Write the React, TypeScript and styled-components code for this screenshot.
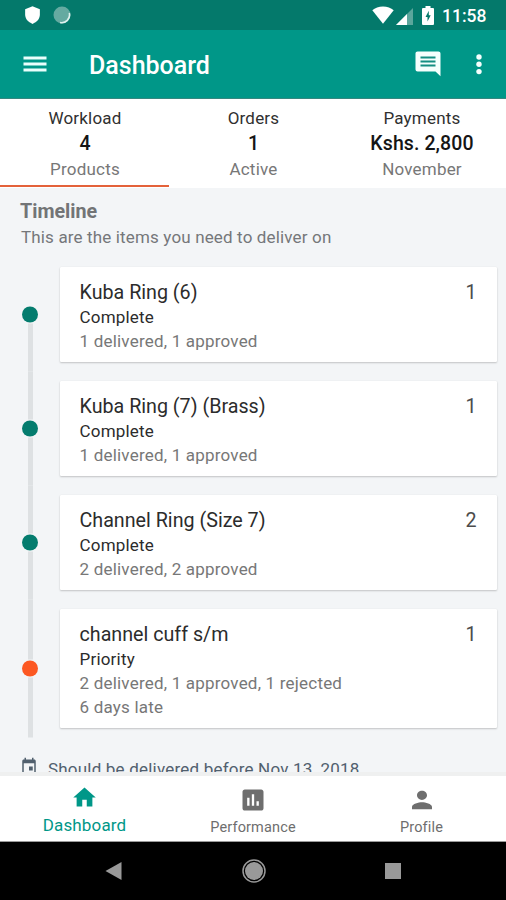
import React from "react";
import styled, { createGlobalStyle } from "styled-components";

const GlobalStyle = createGlobalStyle`
  * { box-sizing: border-box; }
  body { margin: 0; background: #000; font-family: Roboto, "Liberation Sans", sans-serif; }
`;

const Screen = styled.div`
  display: flex;
  flex-direction: column;
  width: 506px;
  height: 900px;
  overflow: hidden;
  background: #f3f5f7;
`;

const StatusBar = styled.div`
  display: flex;
  align-items: center;
  height: 30px;
  flex: none;
  padding: 0 18px 0 24px;
  background: #04796b;
  color: #fff;
`;

const StatusIcons = styled.div`
  display: flex;
  align-items: center;
  gap: 12px;
  flex: 1;
`;

const Clock = styled.span`
  width: 46px;
  margin-left: 8px;
  padding-top: 2px;
  font-size: 17.5px;
  font-weight: 500;
  line-height: 30px;
  white-space: nowrap;
`;

const AppBar = styled.header`
  display: flex;
  align-items: center;
  height: 69px;
  flex: none;
  padding: 0 24px 0 23px;
  background: #009788;
  border-bottom: 1px solid #36877f;
  color: #fff;
`;

const Title = styled.h1`
  flex: 1;
  margin: 4px 0 0 42px;
  font-size: 25px;
  font-weight: 500;
  line-height: 32px;
`;

const Tabs = styled.div`
  display: grid;
  grid-template-columns: 169px 168px 169px;
  height: 89px;
  flex: none;
  background: #fff;
`;

const Tab = styled.div<{ $active?: boolean }>`
  display: flex;
  flex-direction: column;
  align-items: center;
  padding: 7px 0 0 1px;
  border-bottom: 2px solid ${(p) => (p.$active ? "#e4623a" : "transparent")};
  margin-bottom: 1px;
`;

const TabLabel = styled.span`
  font-size: 17px;
  line-height: 25px;
  color: #303030;
  letter-spacing: 0.2px;
`;

const TabValue = styled.span`
  font-size: 19.5px;
  font-weight: 500;
  line-height: 26px;
  color: #151515;
  letter-spacing: 0.1px;
`;

const TabNote = styled(TabLabel)`
  color: #777;
`;

const Content = styled.main`
  height: 584px;
  flex: none;
  overflow: hidden;
  padding: 10px 10px 0 20px;
`;

const Heading = styled.h2`
  margin: 0;
  padding-top: 1px;
  font-size: 19.7px;
  font-weight: 700;
  line-height: 26px;
  color: #727476;
`;

const Subheading = styled.p`
  margin: 0 0 8.5px 1px;
  font-size: 17px;
  line-height: 24px;
  color: #75777a;
  letter-spacing: 0.15px;
`;

const TimelineRow = styled.div`
  display: grid;
  grid-template-columns: 20px 437px;
  column-gap: 19.5px;
`;

const Rail = styled.div`
  display: flex;
  flex-direction: column;
  align-items: center;
  transform: translateY(-0.5px);
`;

const RailLine = styled.i<{ $hidden?: boolean }>`
  flex: 1;
  width: 5px;
  background: ${(p) => (p.$hidden ? "transparent" : "#dee1e3")};
`;

const Dot = styled.i<{ $late?: boolean }>`
  width: 16px;
  height: 16px;
  margin: 1px 0;
  flex: none;
  border-radius: 50%;
  background: ${(p) => (p.$late ? "#fc5822" : "#047c6e")};
`;

const Card = styled.article`
  display: flex;
  justify-content: space-between;
  margin: 9.5px 0;
  padding: 12px 20px 9px;
  background: #fff;
  border-radius: 1px;
  box-shadow: 0 1px 2px rgba(0, 0, 0, 0.2), 0 0 1px rgba(0, 0, 0, 0.1);
`;

const ItemName = styled.div`
  margin-bottom: -2px;
  font-size: 19.7px;
  line-height: 28px;
  color: #2c2c2c;
`;

const ItemStatus = styled.div`
  font-size: 17px;
  line-height: 24px;
  color: #2c2c2c;
  letter-spacing: 0.2px;
`;

const ItemDetail = styled(ItemStatus)`
  color: #777;
`;

const Count = styled(ItemName)`
  color: #4c4c4c;
`;

const DueRow = styled.div`
  display: flex;
  align-items: flex-start;
  gap: 10px;
  margin-top: 19px;
  color: #51606e;
  font-size: 17px;
  line-height: 24px;
  letter-spacing: 0.2px;
  white-space: nowrap;
`;

const BottomNav = styled.nav`
  display: grid;
  grid-template-columns: 169px 168px 169px;
  height: 70px;
  flex: none;
  padding-top: 6px;
  background: #fff;
  border-top: 4px solid #eff0f0;
  border-bottom: 1px solid #9b9b9b;
`;

const NavItem = styled.div<{ $active?: boolean }>`
  display: flex;
  flex-direction: column;
  align-items: center;
  padding-top: ${(p) => (p.$active ? 2 : 4)}px;
  color: ${(p) => (p.$active ? "#009788" : "#6e6e6e")};
  font-size: ${(p) => (p.$active ? 17 : 14.5)}px;
  line-height: 28px;
  letter-spacing: 0.15px;
`;

const SystemNav = styled.div`
  display: flex;
  align-items: center;
  justify-content: space-between;
  height: 58px;
  flex: none;
  padding: 0 105px;
  background: #000;
`;

const StatusRight = styled.div`
  display: flex;
  align-items: center;
`;

const SignalSlot = styled.span`
  display: flex;
  margin: 2px 9px 0 2px;
`;

const AppActions = styled.div`
  display: flex;
  align-items: center;
  gap: 35px;
`;

const ShieldIcon = () => (
  <svg width="17" height="20" viewBox="0 0 18 20"><path fill="#fff" d="M9 0.8 16.8 4v5.6c0 4.500-3.200 8.200-7.800 9.800C4.400 17.800 1.200 14.100 1.200 9.600V4z" /></svg>
);
const SyncIcon = () => (
  <svg width="18" height="18" viewBox="0 0 18 18">
    <circle cx="9" cy="9" r="8.500" fill="#65aaa1" />
    <path d="M16.300 7A7.800 7.800 0 0 1 7 16.500" fill="none" stroke="#e0f1ee" strokeWidth="1.600" />
  </svg>
);
const WifiIcon = () => (
  <svg width="22" height="18" viewBox="0 0 22 18"><path fill="#fff" d="M11 17.700.300 4.300C3 2 6.800.500 11 .500S19 2 21.700 4.300z" /></svg>
);
const SignalIcon = () => (
  <svg width="17" height="17" viewBox="0 0 17 17">
    <path fill="#5ba69c" d="M17 0v17H0z" /><path fill="#fff" d="M11 6v11H0z" />
  </svg>
);
const BatteryIcon = () => (
  <svg width="12" height="19" viewBox="0 0 12 19">
    <path fill="#fff" d="M3.500 0h5v2H11q1 0 1 1v15q0 1-1 1H1q-1 0-1-1V3q0-1 1-1h2.500z" />
    <path fill="#04796b" d="M6.800 4.800 3.500 11h2v4.500L8.700 9.300H6.800z" />
  </svg>
);
const MenuIcon = () => (
  <svg width="24" height="18" viewBox="0 0 24 18"><path fill="#e9fffc" d="M.500 1.500h23v3H.500zM.500 7.500h23v3H.500zM.500 13.500h23v3H.500z" /></svg>
);
const CommentIcon = () => (
  <svg width="26" height="26" viewBox="0 0 26 26">
    <path fill="#f5fffd" d="M2.600.500h20.800c1.200 0 2.100.900 2.100 2.100V25.200l-5-4.700H2.600A2.100 2.100 0 0 1 .500 18.400V2.600C.500 1.400 1.400.500 2.600.500z" />
    <path d="M5.500 6.500h15M5.500 10.500h15M5.500 14.500h15" stroke="#158e82" strokeWidth="2" />
  </svg>
);
const MoreIcon = () => (
  <svg width="6" height="22" viewBox="0 0 6 22"><g fill="#f5fffd"><circle cx="3" cy="4" r="2.700" /><circle cx="3" cy="11.300" r="2.700" /><circle cx="3" cy="18.600" r="2.700" /></g></svg>
);
const CalendarIcon = () => (
  <svg width="18" height="19" viewBox="0 0 24 24" preserveAspectRatio="none">
    <path fill="#51606e" d="M19 3h-1V1h-2v2H8V1H6v2H5C3.900 3 3 3.900 3 5v14c0 1.100.900 2 2 2h14c1.100 0 2-.900 2-2V5c0-1.100-.900-2-2-2zm0 16H5V8h14v11zM12 12h5v5h-5z" />
  </svg>
);
const HomeIcon = () => (
  <svg width="27" height="27" viewBox="0 0 24 24"><path fill="currentColor" d="M10 20v-6h4v6h5v-8h3L12 3 2 12h3v8z" /></svg>
);
const ChartIcon = () => (
  <svg width="28" height="28" viewBox="0 0 24 24"><path fill="currentColor" d="M19 3H5c-1.100 0-2 .900-2 2v14c0 1.100.900 2 2 2h14c1.100 0 2-.900 2-2V5c0-1.100-.900-2-2-2zM9 17H7v-7h2zm4 0h-2V7h2zm4 0h-2v-4h2z" /></svg>
);
const PersonIcon = () => (
  <svg width="30" height="28" viewBox="0 0 24 24" preserveAspectRatio="none"><path fill="currentColor" d="M12 12c2.210 0 4-1.790 4-4s-1.790-4-4-4-4 1.790-4 4 1.790 4 4 4zm0 2c-2.670 0-8 1.340-8 4v2h16v-2c0-2.660-5.330-4-8-4z" /></svg>
);

const items = [
  { name: "Kuba Ring (6)", status: "Complete", details: ["1 delivered, 1 approved"], count: 1 },
  { name: "Kuba Ring (7) (Brass)", status: "Complete", details: ["1 delivered, 1 approved"], count: 1 },
  { name: "Channel Ring (Size 7)", status: "Complete", details: ["2 delivered, 2 approved"], count: 2 },
  { name: "channel cuff s/m", status: "Priority", details: ["2 delivered, 1 approved, 1 rejected", "6 days late"], count: 1 },
];

const tabs = [
  ["Workload", "4", "Products"],
  ["Orders", "1", "Active"],
  ["Payments", "Kshs. 2,800", "November"],
];

export default function App() {
  return (
    <Screen>
      <GlobalStyle />
      <StatusBar>
        <StatusIcons><ShieldIcon /><SyncIcon /></StatusIcons>
        <StatusRight>
          <WifiIcon />
          <SignalSlot><SignalIcon /></SignalSlot>
          <BatteryIcon />
          <Clock>11:58</Clock>
        </StatusRight>
      </StatusBar>
      <AppBar>
        <MenuIcon />
        <Title>Dashboard</Title>
        <AppActions><CommentIcon /><MoreIcon /></AppActions>
      </AppBar>
      <Tabs>
        {tabs.map(([label, value, note], i) => (
          <Tab key={label} $active={i === 0}>
            <TabLabel>{label}</TabLabel>
            <TabValue>{value}</TabValue>
            <TabNote>{note}</TabNote>
          </Tab>
        ))}
      </Tabs>
      <Content>
        <Heading>Timeline</Heading>
        <Subheading>This are the items you need to deliver on</Subheading>
        {items.map((item, i) => (
          <TimelineRow key={item.name}>
            <Rail>
              <RailLine $hidden={i === 0} />
              <Dot $late={item.status === "Priority"} />
              <RailLine />
            </Rail>
            <Card>
              <div>
                <ItemName>{item.name}</ItemName>
                <ItemStatus>{item.status}</ItemStatus>
                {item.details.map((d) => <ItemDetail key={d}>{d}</ItemDetail>)}
              </div>
              <Count>{item.count}</Count>
            </Card>
          </TimelineRow>
        ))}
        <DueRow><CalendarIcon />Should be delivered before Nov 13, 2018</DueRow>
      </Content>
      <BottomNav>
        <NavItem $active><HomeIcon />Dashboard</NavItem>
        <NavItem><ChartIcon />Performance</NavItem>
        <NavItem><PersonIcon />Profile</NavItem>
      </BottomNav>
      <SystemNav>
        <svg width="17" height="20" viewBox="0 0 17 20"><path fill="#999" d="M16.500 1v18L.500 10z" /></svg>
        <svg width="24" height="24" viewBox="0 0 24 24"><circle cx="12" cy="12" r="9" fill="#999" /><circle cx="12" cy="12" r="11" fill="none" stroke="#999" strokeWidth="1.500" /></svg>
        <svg width="16" height="16" viewBox="0 0 16 16"><path fill="#999" d="M0 0h16v16H0z" /></svg>
      </SystemNav>
    </Screen>
  );
}
